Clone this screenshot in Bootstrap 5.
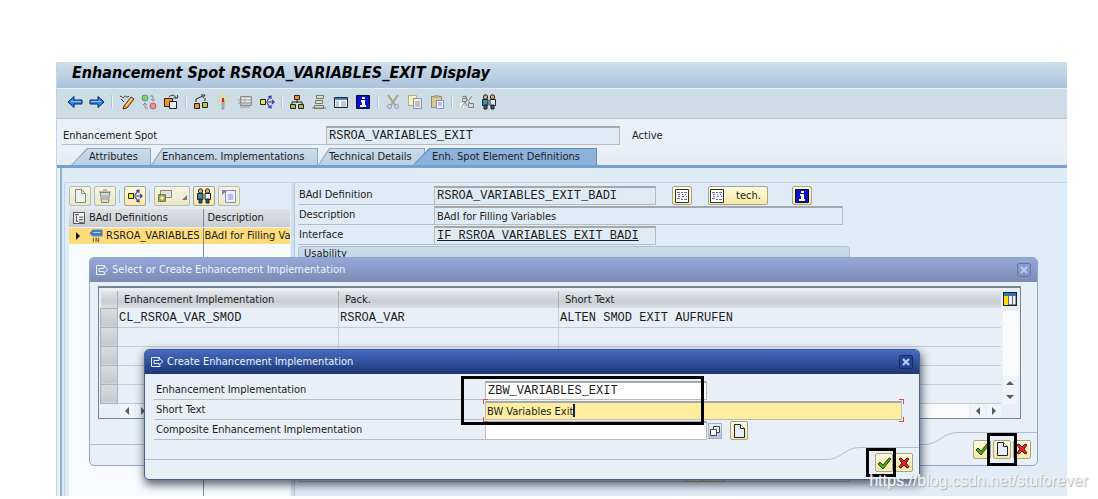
<!DOCTYPE html>
<html lang="en">
<head>
<meta charset="utf-8">
<meta name="viewport" content="width=device-width, initial-scale=1">
<title>Enhancement Spot RSROA_VARIABLES_EXIT Display</title>
<link href="https://cdn.jsdelivr.net/npm/bootstrap@5.3.0/dist/css/bootstrap.min.css" rel="stylesheet">
<style>
body{font-family:"DejaVu Sans Condensed","DejaVu Sans",sans-serif;font-size:11px;line-height:16px;color:#1c1c1c;background:#fff;padding:62px 31px 3px 56px}
input,button,table{font:inherit;color:inherit}
svg{display:block;flex:none}
.mono{font-family:"Liberation Mono",monospace;font-size:12px}
.app{background:#e9f0f7;border-left:1px solid #c3d3e2}
.app-title{height:26px;line-height:22px;padding-left:15px;margin:0;font-size:16px;font-weight:bold;font-style:italic;color:#000;background:linear-gradient(#cfdeea,#aac3dc)}
.app-tools{height:31px;padding:0 10px 4px;gap:6px;background:#cedce6;border-top:1px solid #e6eef5;border-bottom:1px solid #b7c5d2}
.tool{width:16px;height:16px;padding:0;border:0;background:none}
.bar{width:2px;height:13px;background:#aac4dc;border-right:1px solid #e8f1f8}
.spot{height:19px;margin:7px 0 3px 5px;line-height:20px}
.lab{border-bottom:1px solid #b6bec5;height:19px;line-height:18px;padding-left:1px;flex:none}
.lab-spot{width:264px;line-height:20px}
.fld{height:19px;padding:0 2px;border:1px solid #bbb;border-top:2px solid #a5a8ab;border-radius:0;background:#dfebf4;outline:0;min-width:0}
.w-code{width:222px}.w-spot{width:294px}.w-desc{width:409px}
.tabs{padding-left:14px;border-bottom:3px solid #79a0cd;background:linear-gradient(#eaf0f6,#e3ecf5)}
.tab-b{position:relative;isolation:isolate;height:17px;line-height:17px;border:0;padding:0 0 0 11px;text-align:left;white-space:nowrap;background:#8fa9c2;clip-path:polygon(11px 0,100% 0,100% 100%,0 100%)}
.tab-b::before{content:"";position:absolute;inset:1px 1px 0 1px;z-index:-1;background:linear-gradient(#cbdcea,#b9cfe4);clip-path:polygon(11px 0,100% 0,100% 100%,0 100%)}
.tab-b.first,.tab-b.active{padding-left:18px}
.tab-b.first,.tab-b.active,.tab-b.first::before,.tab-b.active::before{clip-path:polygon(16px 0,100% 0,100% 100%,0 100%)}
.tab-b.active{margin-left:-12px;padding-left:19px;background:#5f8dc2}
.tab-b.active::before{background:#8db2dc}
.t1{width:80px}.t2{width:167px}.t3{width:107px}.t4{width:184px}
.panel{margin-left:3px;border-left:2px solid #8db0d8;background:#dfebf5;padding:14px 0 0 2px}
.inner{border-top:1px solid #c2d5e6;border-left:1px solid #c2d5e6;min-height:314px}
.tree{width:225px;overflow:hidden;padding:3px 0 0 4px}
.tree-tools{gap:3px}
.ybtn{height:20px;min-width:20px;padding:0 2px;border:1px solid #a9a38a;border-radius:2px;background:linear-gradient(#fffbe0,#f8e9a6);display:inline-flex;align-items:center;justify-content:center}
.ybtn.row-btn{height:19px;padding:0 1px}
.ybtn.tech{padding-right:6px;gap:12px}
.dim{background:linear-gradient(#f5f5e4,#ebe8c6);border-color:#bcbca8}
.tree-grid{margin-top:3px;background:#f7faff;table-layout:fixed;border-collapse:collapse;width:100%}
.tree-grid th{height:18px;font-weight:normal;padding:0 4px;background:linear-gradient(#dfe1e5,#c9cdd2);border-bottom:1px solid #eef1f4}
.tree-grid td{height:17px;padding:0 1px;background:#fedb7b;white-space:nowrap;overflow:hidden}
.tree-grid .rest{background:#f7faff;height:252px}
.tree-grid th+th,.tree-grid td+td{border-left:1px solid #77899c}
.tree-item{gap:3px;padding-left:4px}
.c1{width:134px}
.gutter{width:5px;background:#d0dfec;border-left:1px solid #e9f1f8;border-right:1px solid #b5cade}
.detail{padding:3px 0 0 3px;gap:1px}
.lab-badi{width:136px}
.groupbox{width:552px;height:236px;border:1px solid #a9c0d6;border-radius:4px 4px 0 0;padding-left:5px;line-height:13px;background:linear-gradient(#cbdcec,#b8d2e4 19px,#dfebf5 20px)}
.peek{margin:202px 0 0 380px;gap:1px}
.win{position:absolute;background:#e8eff6;border:1px solid #93a5c6;border-radius:5px}
.win-title{height:24px;color:#eef3ff;padding:0 6px 0 5px;gap:3px;border-radius:4px 4px 0 0}
.xbtn{width:14px;height:14px;padding:0;border:1px solid #66799f;border-radius:2px;background:none}
.win1{left:32px;right:29px;top:195px}
.win1 .win-title{background:linear-gradient(#95a7d9,#7b8bb4)}
.win2{left:87px;right:147px;top:287px;border-color:#43608f;box-shadow:1px 4px 9px 1px rgba(20,30,45,.65)}
.win2 .win-title{background:linear-gradient(#456bc1,#1b3676)}
.win2 .xbtn{border-color:#162c63;background:#25468f}
.grid-box{margin:4px 16px 13px 8px;border:1px solid #6d8896;border-top-width:2px;padding:3px 1px 0}
.alv{table-layout:fixed;border-collapse:collapse;width:100%;line-height:15px}
.alv th{height:17px;font-weight:normal;background:linear-gradient(#e3e5e8,#c9ced4 60%,#dcdee1);padding:0 6px;border-right:1px solid #a8b0bb}
.alv td{height:19px;padding:2px 1px 0;border-bottom:1px solid #c0cbdb;border-right:1px solid #c9d3e0;white-space:nowrap}
.alv td:first-child{background:linear-gradient(#d8dce0,#c4c9cf);border:1px solid #acb4bd}
.alv th:last-child,.alv td:last-child{border-right:0}
.k0{width:17px}.k1{width:221px}.k2{width:220px}
.vscroll{width:18px;padding-left:2px}
.track{background:#f9fafc}
.arr{width:14px;height:14px;padding:0;border:0;background:#f1f4f8;display:flex;align-items:center;justify-content:center}
.hscroll{padding:0 18px 0 20px;gap:2px}
.foot-l{border-top:1px solid #b4bccb;margin-top:12px}
.foot-r{border-top:1px solid #b4bccb;flex:none;gap:2px}
.foot1{height:33px}.foot1 .foot-r{width:79px;padding:7px 6px 0 0}
.foot2{height:32px}.foot2 .foot-r{width:59px;padding:5px 6px 0 0}
.gbtn{width:18px;min-width:18px;height:19px;padding:0}
.form{padding:7px 0 7px 9px;gap:1px}
.lab-win{width:331px;padding-left:2px}
.white{background:#fff}
.focus{background:#ffed9e;padding:0 1px}
.focus-wrap{margin-right:17px}
.caret{position:absolute;left:88px;top:3px;width:2px;height:13px;background:#101c5c}
.corner{position:absolute;width:5px;height:5px;border:0 solid #e05048}
.c-tl{left:-2px;top:-2px;border-width:1px 0 0 1px}.c-bl{left:-2px;bottom:-2px;border-width:0 0 1px 1px}
.c-tr{right:-2px;top:-2px;border-width:1px 1px 0 0}.c-br{right:-2px;bottom:-2px;border-width:0 1px 1px 0}
.f4{width:14px;height:16px;padding:0;border:1px solid #a3b0c6;background:linear-gradient(#e9eef8,#b3c1dd);margin:0 8px 0 1px}
.frame{position:absolute;border:3px solid #000;pointer-events:none}
.fr-in{left:316px;top:26px;width:243px;height:49px}
.fr-ok{right:23px;bottom:2px;width:30px;height:29px}
.fr-new{right:20px;bottom:-1px;width:30px;height:33px}
.water{position:absolute;right:-21px;bottom:5px;font-family:"Liberation Sans",sans-serif;font-size:16px;line-height:20px;color:#f2f4f6;text-shadow:1px 1px 1px #aab0b6;white-space:nowrap}
</style>
</head>
<body>
<svg width="0" height="0" class="position-absolute" aria-hidden="true">
 <symbol id="left" viewBox="0 0 16 16"><path d="M1 8 7 2.500V6h8v4H7v3.500z" fill="#2a86ea" stroke="#08245f"/><path d="M4 7.500h10" stroke="#8cc8ff"/></symbol>
 <symbol id="right" viewBox="0 0 16 16"><path d="M15 8 9 2.500V6H1v4h8v3.500z" fill="#2a86ea" stroke="#08245f"/><path d="M2 7.500h10" stroke="#8cc8ff"/></symbol>
 <symbol id="pencil" viewBox="0 0 16 16"><path d="M1 3c2-3 2 3 4 0s2 2 5-1M2 5l3 3" fill="none" stroke="#333"/><path d="m5 12 7-9 3 2-7 9-4 1z" fill="#f0a040" stroke="#4a3416"/><path d="m7 12 6-8" stroke="#fff0a0"/></symbol>
 <symbol id="swap" viewBox="0 0 16 16"><circle cx="4" cy="4" r="3" fill="#83d283" stroke="#5c9a62"/><circle cx="12" cy="12" r="3" fill="#ef8c8c" stroke="#a66"/><path d="M9 2h3v4M10 5l2 2 2-2M7 14H4v-4M2 11l2-2 2 2" fill="none" stroke="#888"/></symbol>
 <symbol id="copyobj" viewBox="0 0 16 16"><path d="M1.500 4.500h8v8h-8z" fill="#f39318" stroke="#222"/><path d="M6.500 7.500h7v7h-7z" fill="#eef4fb" stroke="#222"/><path d="M6 3c2-3 6-2 7 1M10.500 4h4V1" fill="none" stroke="#333"/></symbol>
 <symbol id="where" viewBox="0 0 16 16"><path d="M1.500 9.500h5v5h-5z" fill="#f39318" stroke="#222"/><path d="M9.500 8.500h5v5h-5z" fill="#b4c83c" stroke="#222"/><path d="M3 8V5l7-3M8 1h4l-2 3M12 4v3" fill="none" stroke="#222"/></symbol>
 <symbol id="spark" viewBox="0 0 16 16"><path d="M8 0v3M3 2l3 3M13 2l-3 3M2 7h4M10 7h4M4 11l2-2M12 11l-2-2" stroke="#f3de25"/><path d="M7 6h2v9H7z" fill="#b8c0c8" stroke="#667" stroke-width=".5"/><path d="M7 4h2v4H7z" fill="#e32222"/></symbol>
 <symbol id="train" viewBox="0 0 16 16"><path d="M3.500 2.500h11v9h-11z" fill="#c9c9cf" stroke="#8c8c93"/><path d="M5 4h8v4H5z" fill="#eee"/><path d="M1 6h13M1 9h13M3 13h10M8 4v4" stroke="#999"/></symbol>
 <symbol id="tree" viewBox="0 0 16 16"><path d="M1.500 5.500h5v5h-5z" fill="#f0e638" stroke="#222"/><path d="M7 8h8M8 7l3-4M8 9l3 4M9 3l3-1v3M9 13l3 1v-3M13 6l2 2-2 2" fill="none" stroke="#3b3ba8" stroke-width="1.200"/></symbol>
 <symbol id="org" viewBox="0 0 16 16"><path d="M8 6v3M3 11V8h10v3" fill="none" stroke="#222"/><path d="M5.500 1.500h5v4h-5z" fill="#f39318" stroke="#222"/><path d="M1.500 10.500h5v4h-5zM9.500 10.500h5v4h-5z" fill="#a8c23e" stroke="#222"/></symbol>
 <symbol id="stack" viewBox="0 0 16 16"><path d="M5.500 1.500h7v3h-7zM4.500 6.500h7v3h-7zM3.500 11.500h9v3h-9z" fill="#deded0" stroke="#77776c"/><path d="M1 14h14" stroke="#777"/></symbol>
 <symbol id="list" viewBox="0 0 16 16"><path d="M1.500 3.500h13v10h-13z" fill="#fff" stroke="#223"/><path d="M2 4h12v2H2z" fill="#3d83c8"/><path d="M3 8h3M3 10h3M3 12h3M8 8h5M8 10h5M8 12h5" stroke="#7d98b4"/></symbol>
 <symbol id="info" viewBox="0 0 16 16"><path d="M1.500 1.500h13v13h-13z" fill="#0812c8" stroke="#07073a"/><path d="M7 3h3v2H7zM6 6h4v5h1v2H5v-2h2V8H6z" fill="#fff"/></symbol>
 <symbol id="cut" viewBox="0 0 16 16"><path d="m3 1 7 10M13 1 6 11" stroke="#a5a58c" stroke-width="2"/><circle cx="4.500" cy="12.500" r="2" fill="none" stroke="#9090cc"/><circle cx="11.500" cy="12.500" r="2" fill="none" stroke="#9090cc"/></symbol>
 <symbol id="copy" viewBox="0 0 16 16"><path d="M1.500 1.500h8v10h-8z" fill="#f4f0b6" stroke="#b1ae84"/><path d="M6.500 4.500h8v10h-8z" fill="#f4f0b6" stroke="#8d8de0"/><path d="M8 8h5M8 10h5M8 12h5" stroke="#8d8de0"/></symbol>
 <symbol id="paste" viewBox="0 0 16 16"><path d="M2.500 2.500h10v11h-10z" fill="#d9cd86" stroke="#8f8a6a"/><path d="M5 1h5v3H5z" fill="#aaa"/><path d="M7.500 6.500h7v8h-7z" fill="#f0f0ff" stroke="#8d8de0"/><path d="M9 9h4M9 11h4" stroke="#8d8de0"/></symbol>
 <symbol id="percent" viewBox="0 0 16 16"><path d="M1 9h4v5H1z" fill="#fff"/><path d="m2 14 4-6 2 4M6 2l8 12M3 3l4-1v5M10 6l3-4" fill="none" stroke="#858585"/><path d="M9.500 9.500h5v4h-5zM3.500 4.500h4v3h-4z" fill="#dcd9c6" stroke="#858585"/></symbol>
 <symbol id="people" viewBox="0 0 16 16"><circle cx="4.500" cy="3" r="2.200" fill="#d9ad73" stroke="#222"/><circle cx="11.500" cy="3" r="2.200" fill="#d9ad73" stroke="#222"/><path d="M1.500 5.500h5.500v6H1.500z" fill="#3b8fa6" stroke="#222"/><path d="M9 5.500h5.500v6H9z" fill="#e6eef4" stroke="#222"/><path d="M3 11h3v4H3zM10 11h3v4h-3z" fill="#31508a" stroke="#222"/></symbol>
 <symbol id="page" viewBox="0 0 16 16"><path d="M3.500 1.500h6l4 4v9h-10z" fill="#e3f0fc" stroke="#222"/><path d="M9.500 1.500v4h4" fill="#fff" stroke="#222"/></symbol>
 <symbol id="pagedim" viewBox="0 0 16 16"><path d="M3.500 1.500h6l4 4v9h-10z" fill="#eef1ec" stroke="#8d9088"/><path d="M9.500 1.500v4h4" fill="none" stroke="#8d9088"/></symbol>
 <symbol id="trash" viewBox="0 0 16 16"><path d="M3.500 4.500h9l-1 10h-7zM2 4h12M6 2h4" fill="#d9dad2" stroke="#858580"/><path d="M6 7v5M8 7v5M10 7v5" stroke="#999"/></symbol>
 <symbol id="layout" viewBox="0 0 16 16"><path d="M3.500 2.500h11v7h-11z" fill="#dfe3e0" stroke="#86887a"/><path d="M1.500 6.500h7v7h-7z" fill="#a0a84a" stroke="#777c42"/><path d="M3 10h4M5 8v4" stroke="#fff"/></symbol>
 <symbol id="textp" viewBox="0 0 16 16"><path d="M4.500 2.500h10v12h-10z" fill="#ececff" stroke="#8b8bcc"/><path d="M7 7h5M7 9h5M7 11h5" stroke="#8b8bcc"/><path d="M1 2h6L1 7z" fill="#8181b5"/></symbol>
 <symbol id="hier" viewBox="0 0 14 14"><path d="M.5.500h13v13H.5z" fill="#f4f4f4" stroke="#333"/><path d="M2 3h5M7 6h5M7 9h5M7 12h5M4 4v7h2" fill="none" stroke="#333"/></symbol>
 <symbol id="node" viewBox="0 0 16 16"><path d="m1 5 3-4h11v7H4z" fill="#3c7fc4" stroke="#6b87a5"/><path d="M5 4h8" stroke="#cde"/><path d="M5 10v5M8 15v-5l3 5v-5" fill="none" stroke="#555"/></symbol>
 <symbol id="pattern" viewBox="0 0 14 14"><path d="M.5.500h13v13H.5z" fill="#fff" stroke="#333"/><path d="M2 3.500h3M6 3.500h2M9 3.500h3M3 5.500h2M7 5.500h1M10 5.500h1M3 7.500h2M7 7.500h2M11 7.500h1M2 9.500h3M6 10.500h2M9 10.500h3" stroke="#6a6ab8"/></symbol>
 <symbol id="dlg" viewBox="0 0 14 12"><path d="M10 1.500H1.500v9H10V9M4 4.500h5V2L13 5.500 9 9V7.500H4z" fill="none" stroke="#e8eeff"/></symbol>
 <symbol id="x" viewBox="0 0 12 12"><path d="m3 3 6 6M9 3 3 9" stroke="#b4c9ff" stroke-width="2.200"/></symbol>
 <symbol id="ok" viewBox="0 0 16 16"><path d="m2 9 2-2 3 3 6-7 2 1-8 10z" fill="#54a41c" stroke="#1d4a08"/></symbol>
 <symbol id="no" viewBox="0 0 16 16"><path d="m3 4 2-1 3 3 3-3 2 1-3 4 3 4-2 1-3-3-3 3-2-1 3-4z" fill="#e02424" stroke="#6d0a0a"/></symbol>
 <symbol id="cols" viewBox="0 0 14 14"><path d="M.7.700h12.600v12.600H.7z" fill="#eef0f4" stroke="#222" stroke-width="1.400"/><path d="M1 1h12v3H1z" fill="#2a76bd"/><path d="M1 4h4v9H1z" fill="#ffe100"/><path d="M5.500 4v9M9.500 4v9" stroke="#667"/></symbol>
 <symbol id="aL" viewBox="0 0 8 8"><path d="M6 0v8L2 4z" fill="#4c5f70"/></symbol>
 <symbol id="aR" viewBox="0 0 8 8"><path d="M2 0v8l4-4z" fill="#4c5f70"/></symbol>
 <symbol id="aB" viewBox="0 0 8 8"><path d="M2 0v8l4-4z" fill="#111"/></symbol>
 <symbol id="aU" viewBox="0 0 8 8"><path d="M0 6h8L4 2z" fill="#4c5f70"/></symbol>
 <symbol id="aD" viewBox="0 0 8 8"><path d="M0 2h8L4 6z" fill="#4c5f70"/></symbol>
 <symbol id="match" viewBox="0 0 12 12"><path d="M4.500 1.500h6v6h-6z" fill="#fff" stroke="#445"/><path d="M1.500 4.500h6v6h-6z" fill="#fff" stroke="#445"/></symbol>
</svg>

<main class="app position-relative">
 <h1 class="app-title">Enhancement Spot RSROA_VARIABLES_EXIT Display</h1>
 <div class="app-tools d-flex align-items-center" role="toolbar" aria-label="Application toolbar">
  <button class="tool" aria-label="Back"><svg width="16" height="16"><use href="#left"/></svg></button>
  <button class="tool" aria-label="Forward"><svg width="16" height="16"><use href="#right"/></svg></button>
  <span class="bar"></span>
  <button class="tool" aria-label="Display or change"><svg width="16" height="16"><use href="#pencil"/></svg></button>
  <button class="tool" aria-label="Active or inactive"><svg width="16" height="16"><use href="#swap"/></svg></button>
  <button class="tool" aria-label="Other object"><svg width="16" height="16"><use href="#copyobj"/></svg></button>
  <span class="bar"></span>
  <button class="tool" aria-label="Check"><svg width="16" height="16"><use href="#where"/></svg></button>
  <button class="tool" aria-label="Activate"><svg width="16" height="16"><use href="#spark"/></svg></button>
  <button class="tool" aria-label="Transport"><svg width="16" height="16"><use href="#train"/></svg></button>
  <button class="tool" aria-label="Where-used list"><svg width="16" height="16"><use href="#tree"/></svg></button>
  <span class="bar"></span>
  <button class="tool" aria-label="Object list"><svg width="16" height="16"><use href="#org"/></svg></button>
  <button class="tool" aria-label="Navigation stack"><svg width="16" height="16"><use href="#stack"/></svg></button>
  <button class="tool" aria-label="Full screen"><svg width="16" height="16"><use href="#list"/></svg></button>
  <button class="tool" aria-label="Information"><svg width="16" height="16"><use href="#info"/></svg></button>
  <span class="bar"></span>
  <button class="tool" aria-label="Cut"><svg width="16" height="16"><use href="#cut"/></svg></button>
  <button class="tool" aria-label="Copy"><svg width="16" height="16"><use href="#copy"/></svg></button>
  <button class="tool" aria-label="Paste"><svg width="16" height="16"><use href="#paste"/></svg></button>
  <span class="bar"></span>
  <button class="tool" aria-label="Compare"><svg width="16" height="16"><use href="#percent"/></svg></button>
  <button class="tool" aria-label="Find"><svg width="16" height="16"><use href="#people"/></svg></button>
 </div>

 <div class="spot d-flex">
  <label class="lab lab-spot" for="spot">Enhancement Spot</label>
  <input class="fld w-spot mono" id="spot" value="RSROA_VARIABLES_EXIT" readonly>
  <span class="ps-2 ms-1">Active</span>
 </div>

 <div class="tabs d-flex" role="tablist">
  <button class="tab-b first t1" role="tab">Attributes</button>
  <button class="tab-b t2" role="tab">Enhancem. Implementations</button>
  <button class="tab-b t3" role="tab">Technical Details</button>
  <button class="tab-b active t4" role="tab" aria-selected="true">Enh. Spot Element Definitions</button>
 </div>

 <div class="panel">
  <div class="inner d-flex">
   <section class="tree flex-shrink-0">
    <div class="tree-tools d-flex align-items-center">
     <button class="ybtn dim" aria-label="Create"><svg width="16" height="16"><use href="#pagedim"/></svg></button>
     <button class="ybtn dim" aria-label="Delete"><svg width="16" height="16"><use href="#trash"/></svg></button>
     <span class="bar"></span>
     <button class="ybtn" aria-label="Where-used"><svg width="16" height="16"><use href="#tree"/></svg></button>
     <span class="bar"></span>
     <button class="ybtn dim pe-0" aria-label="Layout"><svg width="16" height="16"><use href="#layout"/></svg><svg class="ms-2 mt-1" width="8" height="8"><path d="M6 1v5H1z" fill="#777"/></svg></button>
     <button class="ybtn" aria-label="Find"><svg width="16" height="16"><use href="#people"/></svg></button>
     <button class="ybtn dim" aria-label="Documentation"><svg width="16" height="16"><use href="#textp"/></svg></button>
    </div>
    <table class="tree-grid">
     <thead><tr><th class="c1"><span class="d-flex align-items-center gap-1"><svg width="12" height="12"><use href="#hier"/></svg>BAdI Definitions</span></th><th>Description</th></tr></thead>
     <tbody>
      <tr><td><span class="tree-item d-flex align-items-center"><svg class="me-1" width="8" height="8"><use href="#aB"/></svg><svg width="14" height="14"><use href="#node"/></svg>RSROA_VARIABLES</span></td><td>BAdI for Filling Va</td></tr>
      <tr><td class="rest"></td><td class="rest"></td></tr>
     </tbody>
    </table>
   </section>
   <div class="gutter flex-shrink-0"></div>
   <section class="detail d-flex flex-column flex-grow-1">
    <div class="d-flex align-items-start">
     <label class="lab lab-badi" for="badi">BAdI Definition</label>
     <input class="fld w-code mono" id="badi" value="RSROA_VARIABLES_EXIT_BADI" readonly>
     <button class="ybtn row-btn ms-3" aria-label="Texts"><svg width="14" height="14"><use href="#pattern"/></svg></button>
     <button class="ybtn row-btn tech ms-3"><svg width="14" height="14"><use href="#pattern"/></svg>tech.</button>
     <button class="ybtn row-btn ms-4" aria-label="Information"><svg width="16" height="16"><use href="#info"/></svg></button>
    </div>
    <div class="d-flex align-items-start">
     <label class="lab lab-badi" for="desc">Description</label>
     <input class="fld w-desc" id="desc" value="BAdI for Filling Variables" readonly>
    </div>
    <div class="d-flex align-items-start">
     <label class="lab lab-badi" for="intf">Interface</label>
     <input class="fld w-code mono text-decoration-underline" id="intf" value="IF_RSROA_VARIABLES_EXIT_BADI" readonly>
    </div>
    <div class="groupbox">Usability
     <div class="peek d-flex"><span class="ybtn"></span><span class="ybtn"></span></div>
    </div>
   </section>
  </div>
 </div>

 <section class="win win1" role="dialog" aria-labelledby="d1">
  <div class="win-title d-flex align-items-center">
   <svg width="14" height="12"><use href="#dlg"/></svg><span id="d1" class="flex-grow-1">Select or Create Enhancement Implementation</span>
   <button class="xbtn" aria-label="Close"><svg width="12" height="12"><use href="#x"/></svg></button>
  </div>
  <div class="grid-box">
   <div class="d-flex">
    <table class="alv flex-grow-1">
     <colgroup><col class="k0"><col class="k1"><col class="k2"><col></colgroup>
     <thead><tr><th></th><th>Enhancement Implementation</th><th>Pack.</th><th>Short Text</th></tr></thead>
     <tbody>
      <tr class="mono"><td></td><td>CL_RSROA_VAR_SMOD</td><td>RSROA_VAR</td><td>ALTEN SMOD EXIT AUFRUFEN</td></tr>
      <tr><td></td><td></td><td></td><td></td></tr>
      <tr><td></td><td></td><td></td><td></td></tr>
      <tr><td></td><td></td><td></td><td></td></tr>
      <tr><td></td><td></td><td></td><td></td></tr>
     </tbody>
    </table>
    <div class="vscroll d-flex flex-column flex-shrink-0">
     <button class="tool mb-1" aria-label="Configure columns"><svg width="14" height="14"><use href="#cols"/></svg></button>
     <span class="track flex-grow-1"></span>
     <button class="arr" aria-label="Scroll up"><svg width="8" height="8"><use href="#aU"/></svg></button>
     <button class="arr" aria-label="Scroll down"><svg width="8" height="8"><use href="#aD"/></svg></button>
    </div>
   </div>
   <div class="hscroll d-flex">
    <button class="arr" aria-label="Scroll left"><svg width="8" height="8"><use href="#aL"/></svg></button>
    <button class="arr" aria-label="Scroll right"><svg width="8" height="8"><use href="#aR"/></svg></button>
    <span class="track flex-grow-1"></span>
    <button class="arr" aria-label="Previous columns"><svg width="8" height="8"><use href="#aL"/></svg></button>
    <button class="arr" aria-label="Next columns"><svg width="8" height="8"><use href="#aR"/></svg></button>
   </div>
  </div>
  <div class="foot1 d-flex">
   <div class="foot-l flex-grow-1"></div>
   <svg width="34" height="14"><path d="M0 12.500C16 12.500 18 .5 34 .5" fill="none" stroke="#b4bccb"/></svg>
   <div class="foot-r d-flex justify-content-end">
    <button class="ybtn gbtn" aria-label="Continue"><svg width="16" height="16"><use href="#ok"/></svg></button>
    <button class="ybtn gbtn" aria-label="Create"><svg width="16" height="16"><use href="#page"/></svg></button>
    <button class="ybtn gbtn" aria-label="Cancel"><svg width="16" height="16"><use href="#no"/></svg></button>
   </div>
  </div>
  <span class="frame fr-new"></span>
 </section>

 <section class="win win2" role="dialog" aria-labelledby="d2">
  <div class="win-title d-flex align-items-center">
   <svg width="14" height="12"><use href="#dlg"/></svg><span id="d2" class="flex-grow-1">Create Enhancement Implementation</span>
   <button class="xbtn" aria-label="Close"><svg width="12" height="12"><use href="#x"/></svg></button>
  </div>
  <div class="form d-flex flex-column">
   <div class="d-flex">
    <label class="lab lab-win" for="impl">Enhancement Implementation</label>
    <input class="fld white w-code mono" id="impl" value="ZBW_VARIABLES_EXIT">
   </div>
   <div class="d-flex">
    <label class="lab lab-win" for="short">Short Text</label>
    <div class="focus-wrap position-relative flex-grow-1 d-flex">
     <input class="fld focus flex-grow-1" id="short" value="BW Variables Exit">
     <span class="caret"></span>
     <span class="corner c-tl"></span><span class="corner c-bl"></span><span class="corner c-tr"></span><span class="corner c-br"></span>
    </div>
   </div>
   <div class="d-flex align-items-center">
    <label class="lab lab-win" for="comp">Composite Enhancement Implementation</label>
    <input class="fld white w-code mono" id="comp">
    <button class="f4" aria-label="Value help"><svg width="12" height="12"><use href="#match"/></svg></button>
    <button class="ybtn gbtn" aria-label="Create composite"><svg width="16" height="16"><use href="#page"/></svg></button>
   </div>
  </div>
  <div class="foot2 d-flex">
   <div class="foot-l flex-grow-1"></div>
   <svg width="34" height="14"><path d="M0 12.500C16 12.500 18 .5 34 .5" fill="none" stroke="#b4bccb"/></svg>
   <div class="foot-r d-flex justify-content-end">
    <button class="ybtn gbtn" aria-label="Continue"><svg width="16" height="16"><use href="#ok"/></svg></button>
    <button class="ybtn gbtn" aria-label="Cancel"><svg width="16" height="16"><use href="#no"/></svg></button>
   </div>
  </div>
  <span class="frame fr-in"></span>
  <span class="frame fr-ok"></span>
 </section>
 <div class="water">https://blog.csdn.net/stuforever</div>
</main>
<script src="https://cdn.jsdelivr.net/npm/bootstrap@5.3.0/dist/js/bootstrap.bundle.min.js"></script>
</body>
</html>
